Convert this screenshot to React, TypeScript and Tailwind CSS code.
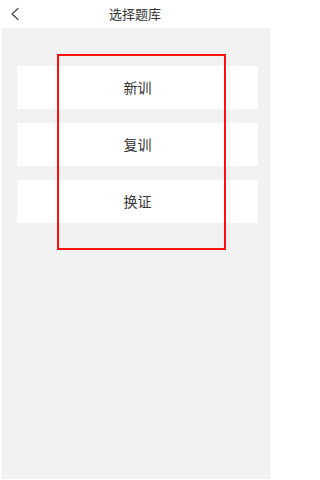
const options = ['新训', '复训', '换证'];

export default function App() {
  return (
    <div
      className="relative w-[270px] h-[480px] bg-white flex flex-col overflow-hidden"
      style={{ fontFamily: '"Noto Sans CJK SC", "Noto Sans", sans-serif' }}
    >
      {/* header */}
      <div className="relative h-[28px] flex items-center justify-center shrink-0">
        <svg className="absolute left-[10px] top-[7px]" width="10" height="14" viewBox="0 0 10 14" fill="none">
          <path d="M8 1.5 L2 7 L8 12.5" stroke="#444" strokeWidth="1.2" strokeLinecap="round" strokeLinejoin="round" />
        </svg>
        <span className="text-[13px] text-[#333]">选择题库</span>
      </div>

      {/* body */}
      <div className="ml-[2px] h-[451px] bg-[#f2f2f2] pt-[38px] pl-[15px] pr-[12px] flex flex-col gap-[14px]">
        {options.map((o) => (
          <div key={o} className="h-[43px] bg-white flex items-center justify-center text-[14px] text-[#333]">
            {o}
          </div>
        ))}
      </div>

      {/* highlight frame */}
      <div className="absolute left-[57px] top-[54px] w-[169px] h-[196px] border-2 border-[#ff1010] pointer-events-none" />
    </div>
  );
}
